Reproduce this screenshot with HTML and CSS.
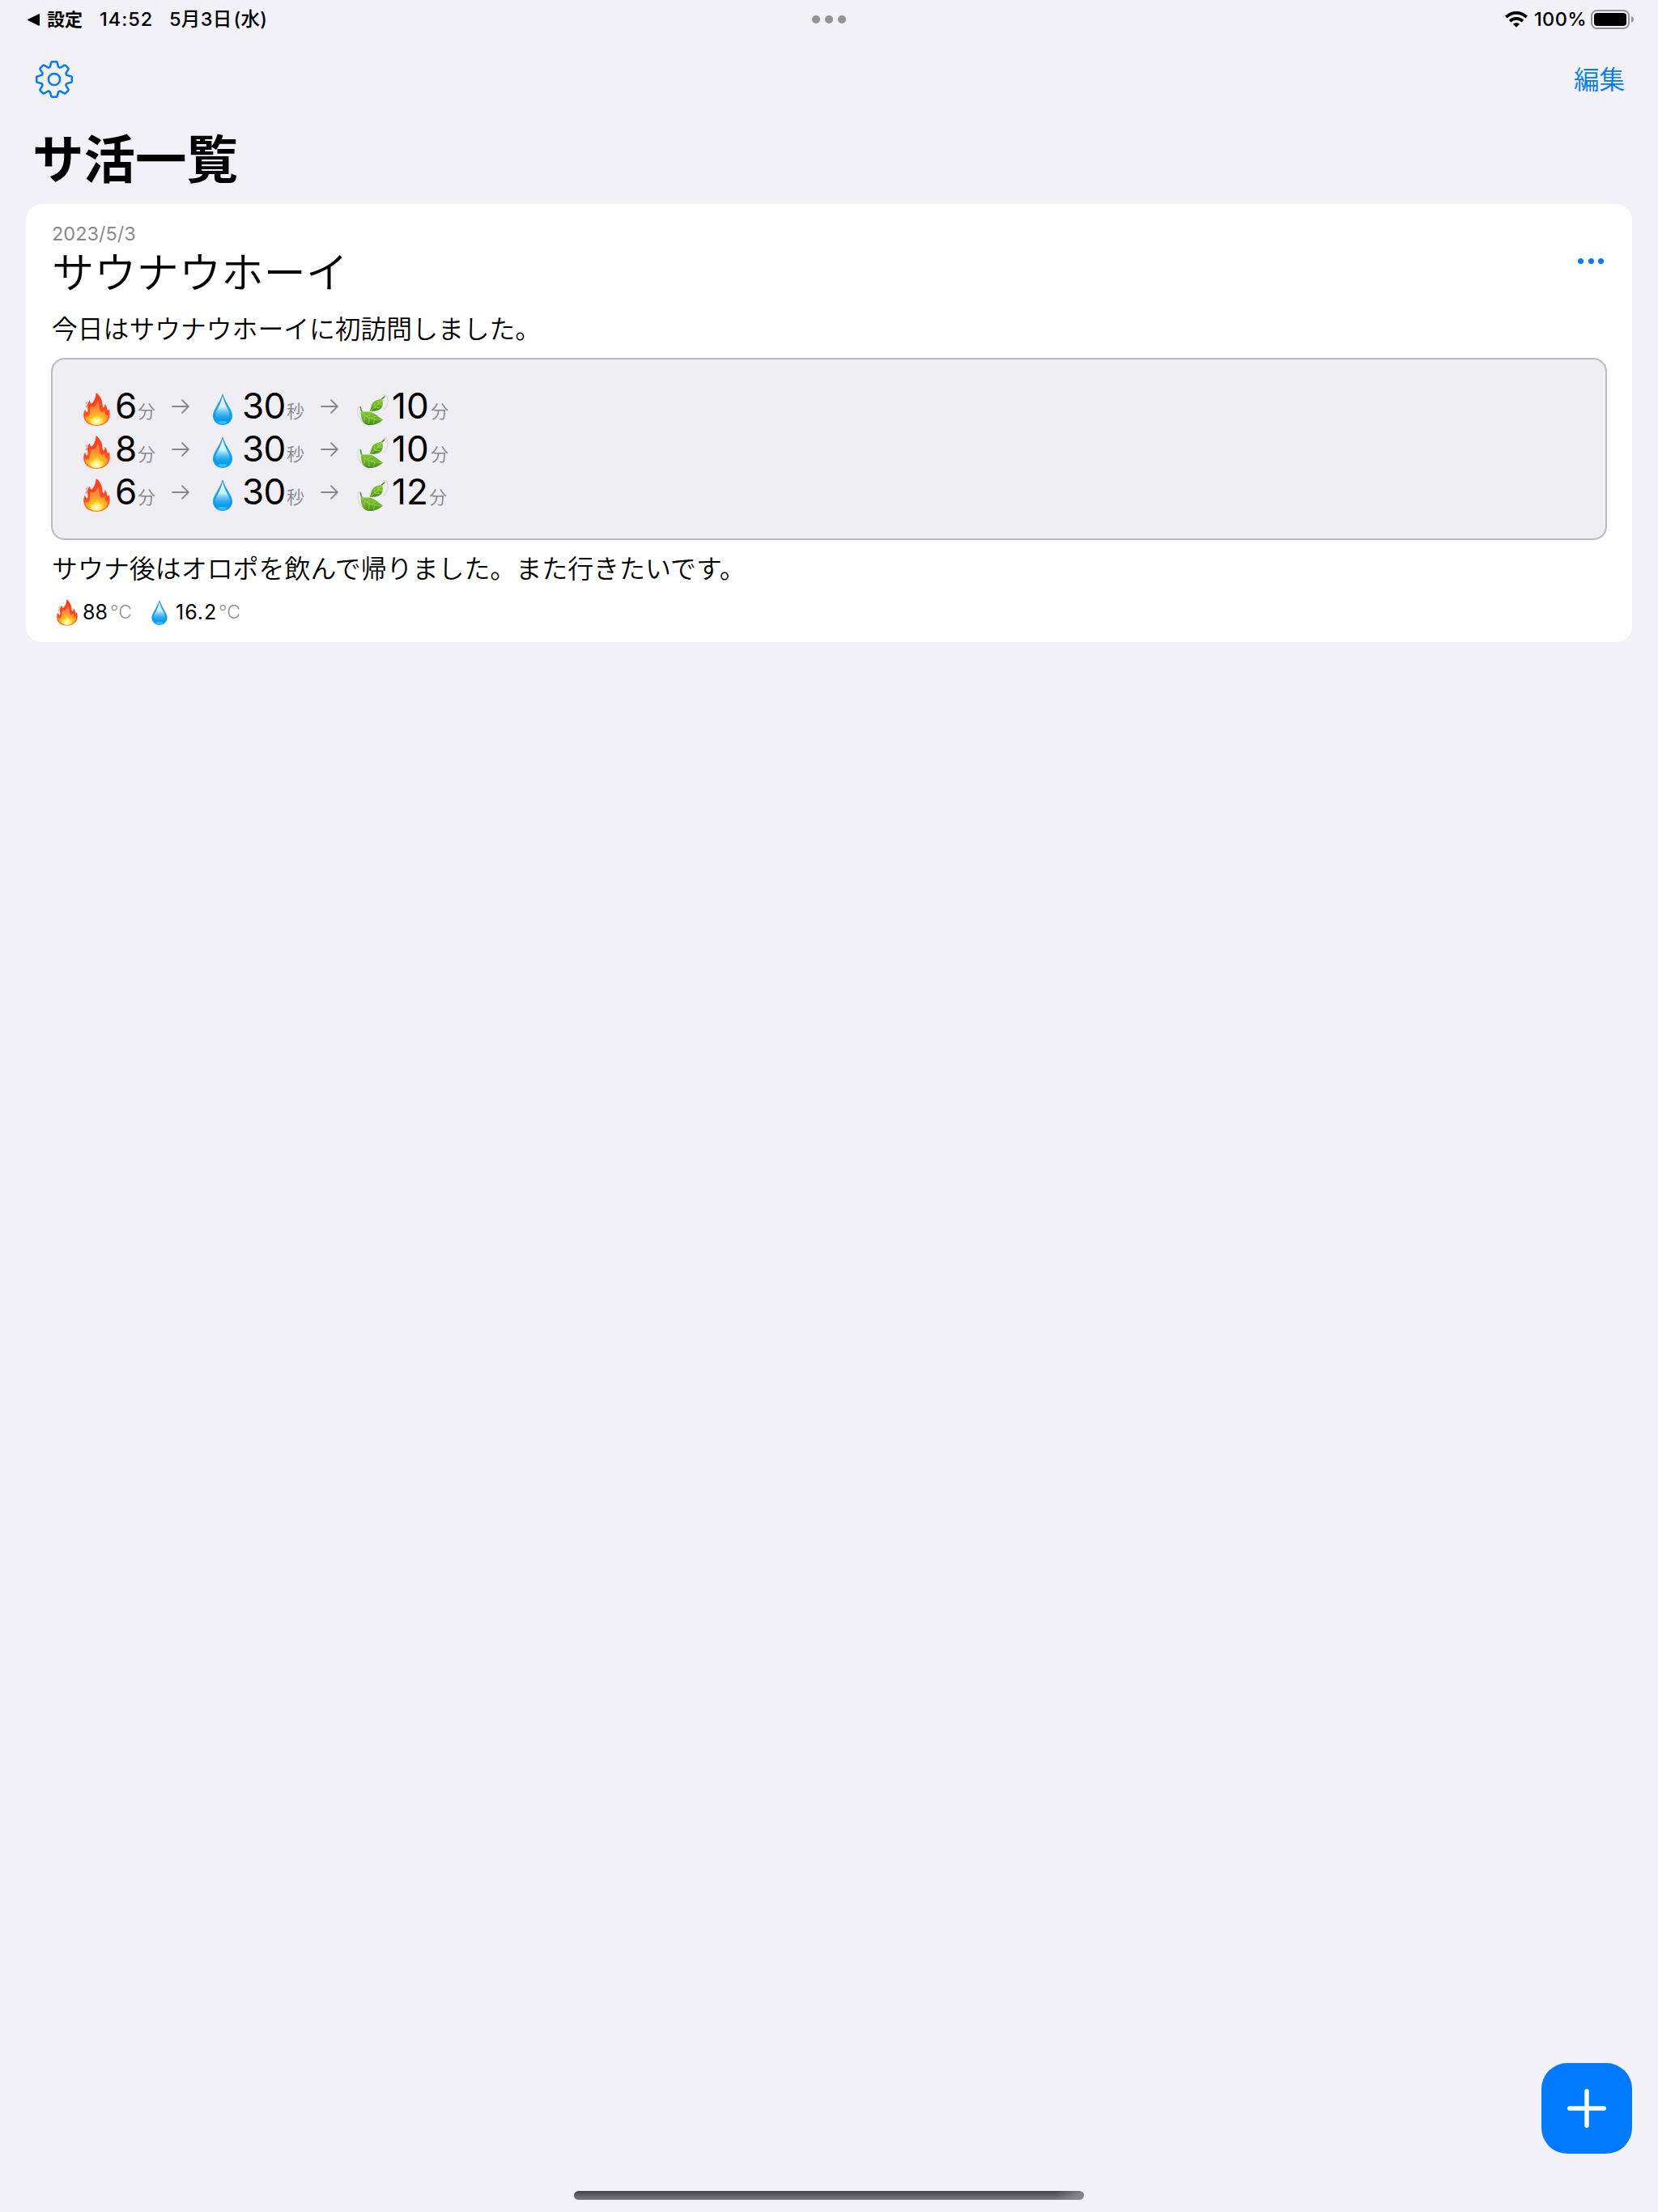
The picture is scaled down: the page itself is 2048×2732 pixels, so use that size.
FILE: index.html
```html
<!DOCTYPE html>
<html lang="ja">
<head>
<meta charset="utf-8">
<title>サ活一覧</title>
<link rel="stylesheet" href="styles.css">
</head>
<body>
<svg class="defs" width="0" height="0" aria-hidden="true">
  <defs>
    <linearGradient id="flameOuter" x1="0" y1="0" x2="0" y2="1">
      <stop offset="0" stop-color="#ff3a1c"/><stop offset=".6" stop-color="#ff4a22"/><stop offset="1" stop-color="#ff7a1a"/>
    </linearGradient>
    <radialGradient id="flameMid" cx=".5" cy=".95" r=".9">
      <stop offset="0" stop-color="#fff27a"/><stop offset=".35" stop-color="#ffc020"/><stop offset=".65" stop-color="#ff8f30"/><stop offset="1" stop-color="#ff7a44"/>
    </radialGradient>
    <radialGradient id="flameCore" cx=".5" cy=".75" r=".6">
      <stop offset="0" stop-color="#fffee8"/><stop offset=".5" stop-color="#fff27a"/><stop offset="1" stop-color="#ffdc2e" stop-opacity=".5"/>
    </radialGradient>
    <linearGradient id="dropFill" x1="0" y1="0" x2="0" y2="1">
      <stop offset="0" stop-color="#2f8fd2"/><stop offset=".45" stop-color="#23a5ea"/><stop offset=".85" stop-color="#079bf0"/><stop offset="1" stop-color="#1cabf5"/>
    </linearGradient>
    <linearGradient id="dropShine" x1="0" y1="0" x2="0" y2="1">
      <stop offset="0" stop-color="#dff8ff"/><stop offset=".45" stop-color="#d2f4ff"/><stop offset="1" stop-color="#2fb0f2" stop-opacity="0"/>
    </linearGradient>
    <linearGradient id="leafFill" x1="0" y1="0" x2="0" y2="1">
      <stop offset="0" stop-color="#86c52f"/><stop offset=".5" stop-color="#6cb52b"/><stop offset="1" stop-color="#468a1d"/>
    </linearGradient>
    <symbol id="fire" viewBox="0 0 33 41">
      <path fill="url(#flameOuter)" d="M15.600 0C20 3 23 8 23.500 14C23.600 16 23.900 18 25 18.600C26.500 17.500 26.600 15.500 26.300 13.500C28.500 15.500 29 18.500 29.600 21.200C30.300 22.200 31 21.500 31.700 20.200C33 24 33.200 29 31.500 32.500C29 38 23.500 41 16.500 41C8.500 41 2.500 37.500.8 31.500C-.3 27.500.3 23.500 2 20.500C2.500 22.500 3.200 24 4.700 24.500C6.300 23.500 5.200 20 5 17.500C4.800 14 6 11 8 9.500C8.200 11.500 8.500 13 9.600 13.500C12.500 12.500 15.500 6.500 15.600 0Z"/>
      <path fill="#ff5a2a" d="M5 10.200L3.100 12.500L3.200 15ZM4.800 15L2.800 16.600L3 19.200Z"/>
      <path fill="url(#flameMid)" d="M17.200 9C20.500 13 19.500 17 20.500 21C22 25.500 25 24 26 21.500C27 24 27 28 28.500 28.500C29.500 28.500 30 27.500 30.600 26.500C30.500 34 26 39.800 16.500 39.800C7 39.800 2 34 2 28.500C3.500 30.500 6.500 30 7.500 27C8.400 23 8 19.500 8.700 17C13.500 18.500 17.500 15 17.200 9Z"/>
      <path fill="url(#flameCore)" d="M16.500 26C19 28 19.500 30.500 21.500 31.500C23 31.500 23.800 30.500 24.200 29.500C25 35 22.500 39.800 16.500 39.800C10 39.800 7 36 8 31C9.500 33 11 32.500 12 31.500C14.500 30 15 28 16.500 26Z"/>
    </symbol>
    <symbol id="drop" viewBox="0 0 24 39">
      <path fill="url(#dropFill)" d="M12 0C13.800 6 17.300 12 20.500 17.500C22.600 21 24 24 24 27.500C24 34.200 18.700 39 12 39S0 34.200 0 27.500C0 24 1.400 21 3.500 17.500C6.700 12 10.200 6 12 0Z"/>
      <path fill="url(#dropShine)" d="M12 3C13.500 9 15.500 14 18 18.500C20 22 20.800 24 20.800 26.500C20.800 31 17 33 12 33S3.200 31 3.200 26.500C3.200 24 4 22 6 18.500C8.500 14 10.500 9 12 3Z"/>
      <ellipse cx="12" cy="35.600" rx="5" ry="1.800" fill="#5acdfb" opacity=".6"/>
    </symbol>
    <symbol id="leaf" viewBox="0 0 39 40">
      <g fill="none" stroke="#d8d8dc" stroke-width="1.300" stroke-linecap="round">
        <path d="M1.500 16C-.2 23 2 30 7 35M5.500 17C4 20 4 23 5 26M36 1C39.500 8 38 15 33 20M32.500 2C34 1 34.800 1.500 34.500 3"/>
      </g>
      <path fill="none" stroke="#4f9420" stroke-width="1.600" stroke-linecap="round" d="M33.800 4C31.500 5.500 30.500 7 29.500 9M4.200 16.500C4.500 20 6 23 8 25.500"/>
      <path fill="url(#leafFill)" d="M30.800 6.800C24 7.500 19 10 17.800 15C17.500 17.500 16.800 19.500 15.500 21.500C22 22.700 29 21 31 16.500C32.200 13.500 32 10 30.800 6.800Z"/>
      <path fill="none" stroke="#b4df62" stroke-width=".7" d="M16.500 21C21 18 26 13.500 30.500 7.500M22 17L21.700 12M26 13L25.700 9M22 17L28 17.800M26 13L31 13.300"/>
      <path fill="url(#leafFill)" d="M5 21.500C8 23.500 11 22 15 22.500C22.500 23.500 26 29 32 32.300C28 37 21 39.500 14 39C7 38 4.500 31 5 21.500Z"/>
      <path fill="none" stroke="#a7d952" stroke-width=".7" d="M5.500 22.500C10 28.500 18 32.500 31 32.500M12 28.500L17 25M18 31L23 28M9.500 26.500L9 33.500M15 30L14.500 37M21.500 32L20.500 37"/>
    </symbol>
    <symbol id="arrow" viewBox="0 0 22 18">
      <path fill="none" stroke="#86868b" stroke-width="1.900" stroke-linecap="round" stroke-linejoin="round" d="M1 9H20.500M13 1.200L20.800 9L13 16.800"/>
    </symbol>
  </defs>
</svg>

<div class="screen">
  <header class="status">
    <div class="status-left">
      <svg class="back" viewBox="0 0 15 15"><path d="M14 .2C14.700 0 15 .4 15 1V14C15 14.700 14.500 15 13.900 14.700L.8 8.300C-.2 7.800-.2 7.200.8 6.700Z"/></svg>
      <span class="back-app">設定</span>
      <span class="time">14:52</span>
      <span class="date">5月3日<span class="paren">(水)</span></span>
    </div>
    <div class="multitask"><i></i><i></i><i></i></div>
    <div class="status-right">
      <svg class="wifi" viewBox="0 0 28 20">
        <g fill="none" stroke="#000" stroke-width="3.800"><path d="M1.300 7.200C8.500.2 19.500.2 26.700 7.200M6.100 12.100C10.600 7.900 17.400 7.900 21.900 12.100"/></g>
        <path d="M14 19.800L9.800 15.800C12.200 13.700 15.800 13.700 18.200 15.800Z"/>
      </svg>
      <span class="percent">100%</span>
      <svg class="battery" viewBox="0 0 53 24">
        <rect x="1" y="1" width="46" height="22" rx="6.500" fill="none" stroke="#949497" stroke-width="2"/>
        <rect x="4" y="4" width="40" height="16" rx="4" fill="#000"/>
        <path fill="#949497" d="M50 8C54 9.500 54 14.500 50 16Z"/>
      </svg>
    </div>
  </header>

  <nav class="toolbar">
    <svg class="gear" viewBox="0 0 46 46">
      <g fill="none" stroke="#007aff" stroke-width="2.500" stroke-linejoin="round">
        <path d="M19.400 1.900Q19.700 1.200 20.500 1.200H25.500Q26.300 1.200 26.600 1.900L28.200 7.600Q29.400 8.700 30.600 8.500L35.400 5.600Q36.200 5.200 36.800 5.700L40.300 9.200Q40.800 9.800 40.400 10.600L37.500 15.400Q37.300 16.600 38.400 17.800L44.100 19.400Q44.800 19.700 44.800 20.500V25.500Q44.800 26.300 44.100 26.600L38.400 28.200Q37.300 29.400 37.500 30.600L40.400 35.400Q40.800 36.200 40.300 36.800L36.800 40.300Q36.200 40.800 35.400 40.400L30.600 37.500Q29.400 37.300 28.200 38.400L26.600 44.100Q26.300 44.800 25.500 44.800H20.500Q19.700 44.800 19.400 44.100L17.800 38.400Q16.600 37.300 15.400 37.500L10.600 40.400Q9.800 40.800 9.200 40.300L5.700 36.800Q5.200 36.200 5.600 35.400L8.500 30.600Q8.700 29.400 7.600 28.200L1.900 26.600Q1.200 26.300 1.200 25.500V20.500Q1.200 19.700 1.900 19.400L7.600 17.800Q8.700 16.600 8.500 15.400L5.600 10.600Q5.200 9.800 5.700 9.200L9.200 5.700Q9.800 5.200 10.600 5.600L15.400 8.500Q16.600 8.700 17.800 7.600Z"/>
        <circle cx="23" cy="23" r="7.100"/>
      </g>
    </svg>
    <span class="edit">編集</span>
  </nav>

  <h1 class="title">サ活一覧</h1>

  <article class="card">
    <div class="card-head">
      <div>
        <div class="visit-date">2023/5/3</div>
        <h2 class="name">サウナウホーイ</h2>
      </div>
      <div class="more"><i></i><i></i><i></i></div>
    </div>
    <p class="text">今日はサウナウホーイに初訪問しました。</p>
    <div class="sets">
      <div class="set">
        <svg class="fire"><use href="#fire"/></svg><span class="num one">6</span><span class="unit">分</span>
        <svg class="arrow"><use href="#arrow"/></svg>
        <svg class="drop"><use href="#drop"/></svg><span class="num two">30</span><span class="unit">秒</span>
        <svg class="arrow"><use href="#arrow"/></svg>
        <svg class="leaf"><use href="#leaf"/></svg><span class="num rest">10</span><span class="unit">分</span>
      </div>
      <div class="set">
        <svg class="fire"><use href="#fire"/></svg><span class="num one">8</span><span class="unit">分</span>
        <svg class="arrow"><use href="#arrow"/></svg>
        <svg class="drop"><use href="#drop"/></svg><span class="num two">30</span><span class="unit">秒</span>
        <svg class="arrow"><use href="#arrow"/></svg>
        <svg class="leaf"><use href="#leaf"/></svg><span class="num rest">10</span><span class="unit">分</span>
      </div>
      <div class="set">
        <svg class="fire"><use href="#fire"/></svg><span class="num one">6</span><span class="unit">分</span>
        <svg class="arrow"><use href="#arrow"/></svg>
        <svg class="drop"><use href="#drop"/></svg><span class="num two">30</span><span class="unit">秒</span>
        <svg class="arrow"><use href="#arrow"/></svg>
        <svg class="leaf"><use href="#leaf"/></svg><span class="num rest twelve">12</span><span class="unit">分</span>
      </div>
    </div>
    <p class="text after">サウナ後はオロポを飲んで帰りました。また行きたいです。</p>
    <div class="temps">
      <svg class="fire-s"><use href="#fire"/></svg><span class="deg hot">88</span><span class="celsius">°C</span>
      <svg class="drop-s"><use href="#drop"/></svg><span class="deg cold">16.2</span><span class="celsius">°C</span>
    </div>
  </article>

  <footer class="bottom">
    <button class="add" aria-label="追加"><svg viewBox="0 0 48 48"><path d="M24 2.700V45.300M2.700 24H45.300" stroke="#fff" stroke-width="5.400" stroke-linecap="round"/></svg></button>
    <div class="home-bar"></div>
  </footer>
</div>
</body>
</html>
```

FILE: styles.css
```css
* { box-sizing: border-box; margin: 0; padding: 0; }
body {
  background: #f2f1f7;
  color: #000;
  font-family: Inter, "Noto Sans CJK JP", sans-serif;
}
.defs { display: block; position: absolute; }
svg { display: block; flex: none; }
.screen { width: 2048px; height: 2732px; display: flex; flex-direction: column; overflow: hidden; }

.status {
  height: 48px;
  display: grid;
  grid-template-columns: 1fr auto 1fr;
  align-items: center;
  padding: 0 30px 0 34px;
  font-size: 23.5px;
  font-weight: 500;
  line-height: 48px;
  white-space: nowrap;
}
.status-left, .status-right { display: flex; align-items: center; height: 48px; }
.status-right { justify-content: flex-end; }
.back { width: 15px; height: 15px; }
.back-app { width: 65px; margin-left: 9px; font-size: 22px; font-weight: 700; }
.time { width: 86px; letter-spacing: 1px; }
.date { letter-spacing: .3px; }
.paren { margin-left: 2px; }
.multitask { display: flex; gap: 6px; margin-left: -4px; }
.multitask i { width: 10px; height: 10px; border-radius: 50%; background: #939298; }
.wifi { width: 28px; height: 20px; }
.percent { margin: 0 5px 0 8px; letter-spacing: .4px; }
.battery { width: 53px; height: 24px; }

.toolbar {
  height: 100px;
  display: flex;
  align-items: center;
  justify-content: space-between;
  padding: 0 41px 0 44px;
}
.gear { width: 46px; height: 46px; }
.edit { padding-top: 2px; font-size: 31.5px; line-height: 48px; color: #007aff; font-weight: 350; }
.title { height: 104px; padding-left: 40px; font-size: 63.5px; line-height: 98px; font-weight: 700; }

.card {
  margin: 0 32px;
  height: 541px;
  padding: 20px 31px 0;
  background: #fff;
  border-radius: 20px;
}
.card-head { display: flex; justify-content: space-between; height: 123px; }
.visit-date { padding-left: 1px; height: 34px; font-size: 23.5px; line-height: 34px; color: #8a8a8e; }
.name { padding-left: 1px; font-size: 52.300px; line-height: 62px; font-weight: 350; }
.more { display: flex; gap: 5.300px; margin: 47px 4px 0 0; }
.more i { width: 7px; height: 7px; border-radius: 50%; background: #007aff; }
.text { height: 47px; padding-left: 1px; font-size: 31.8px; line-height: 24px; font-weight: 350; white-space: nowrap; }

.sets {
  height: 225px;
  padding: 31px 36px 35px;
  background: #efeef3;
  border: 2px solid #bbbbbf;
  border-radius: 17px;
}
.set { height: 53px; display: flex; align-items: center; }
.fire { width: 33px; height: 41px; margin: 7px 6px 0 2px; }
.num { font-size: 44px; line-height: 53px; white-space: nowrap; }
.one { width: 28px; }
.two { width: 55px; letter-spacing: -.8px; }
.rest { width: 48px; }
.twelve { width: 46px; }
.unit { width: 22px; font-size: 22px; line-height: 53px; margin-top: 14px; color: #86868b; font-weight: 350; }
.arrow { width: 22px; height: 18px; margin: 0 29px 0 20px; }
.drop { width: 24px; height: 39px; margin: 7px 12px 0 0; }
.leaf { width: 39px; height: 40px; margin: 9px 4px 0 -6px; }

.after { height: 72px; line-height: 72px; font-size: 31.950px; }
.temps { display: flex; align-items: center; height: 34px; padding-left: 7px; }
.fire-s { width: 26px; height: 33px; }
.deg { font-size: 25px; line-height: 34px; }
.hot { width: 34px; margin-left: 6px; }
.cold { width: 53px; margin-left: 10px; letter-spacing: 1px; }
.celsius { width: 51px; font-size: 23px; line-height: 34px; color: #929297; font-weight: 300; }
.drop-s { width: 20px; height: 31px; }

.bottom { margin-top: auto; display: flex; flex-direction: column; align-items: center; height: 184px; }
.add {
  align-self: flex-end;
  width: 112px;
  height: 112px;
  margin-right: 32px;
  border: 0;
  border-radius: 32px;
  background: #007aff;
  display: grid;
  place-items: center;
}
.add svg { width: 48px; height: 48px; }
.home-bar {
  width: 630px;
  height: 11px;
  margin-top: 46px;
  border-radius: 6px;
  background:
    radial-gradient(circle at 100% 100%, #8f8e93 0, #8f8e9300 36px),
    linear-gradient(#444348, #7b7a7f);
}
```
